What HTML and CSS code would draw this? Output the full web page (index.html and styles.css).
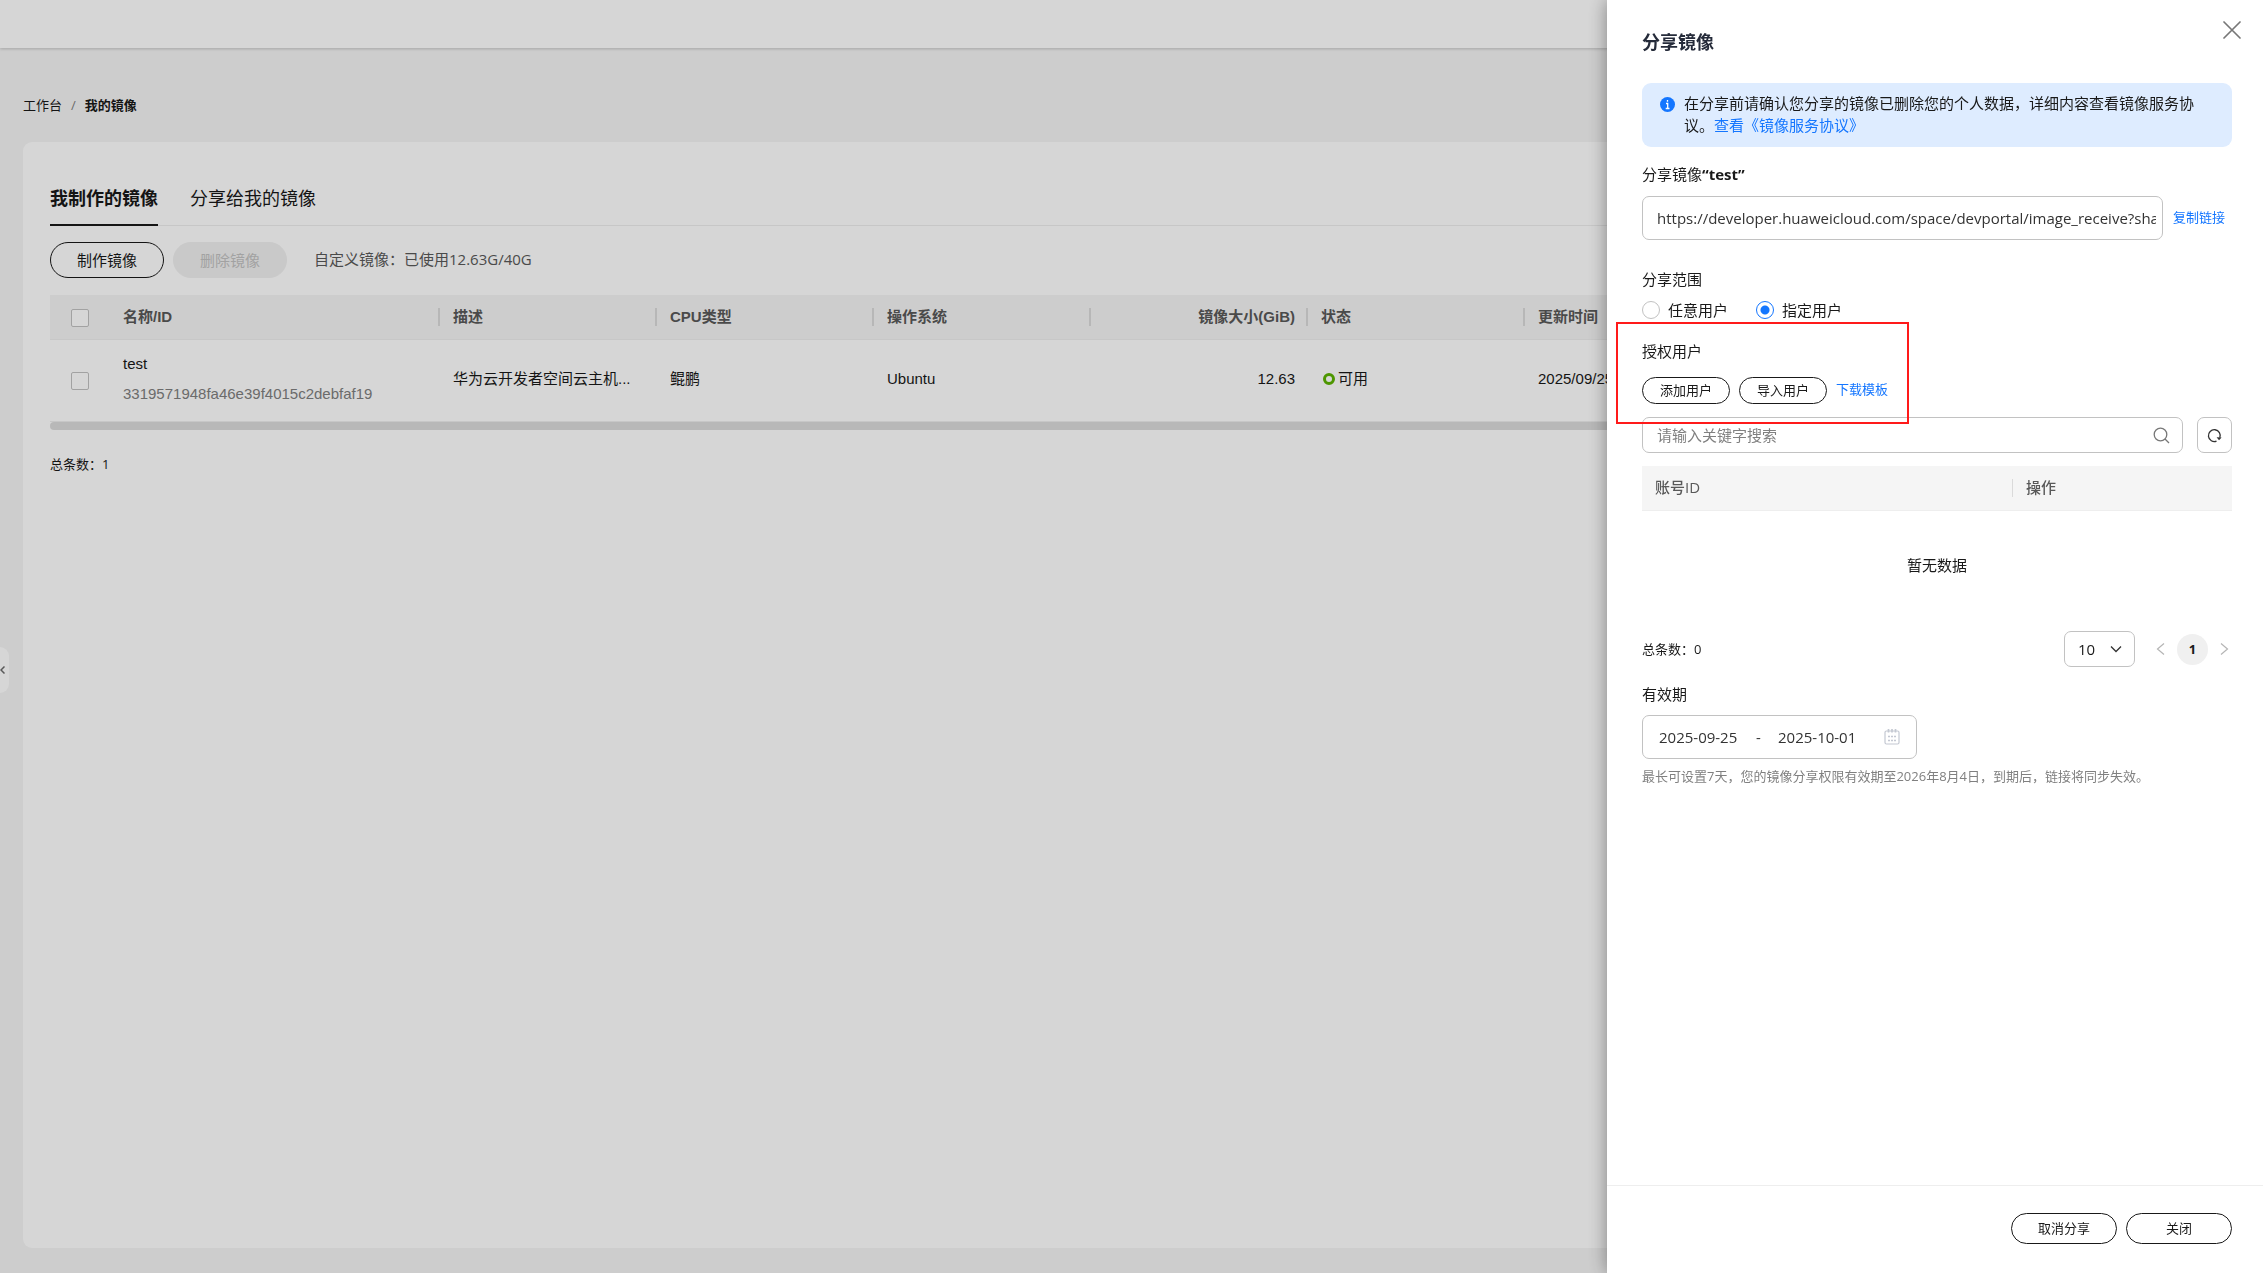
FILE: index.html
```html
<!DOCTYPE html>
<html lang="zh-CN">
<head>
    <meta charset="UTF-8">
    <meta name="viewport" content="width=device-width, initial-scale=1.0">
    <title>我的镜像</title>
    <link rel="stylesheet" href="styles.css">
</head>
<body>
    <header class="topbar"></header>

    <main class="page">
        <nav class="breadcrumb">
            <a href="#">工作台</a>
            <span class="breadcrumb-sep">/</span>
            <strong>我的镜像</strong>
        </nav>

        <section class="card">
            <div class="tabs">
                <a class="tab active" href="#">我制作的镜像</a>
                <a class="tab" href="#">分享给我的镜像</a>
            </div>

            <div class="toolbar">
                <button class="btn btn-lg" type="button">制作镜像</button>
                <button class="btn btn-lg" type="button" disabled>删除镜像</button>
                <span class="quota">自定义镜像：已使用12.63G/40G</span>
            </div>

            <div class="table-wrap">
                <table class="image-table">
                    <colgroup>
                        <col class="col-check">
                        <col class="col-name">
                        <col class="col-base" span="6">
                        <col>
                    </colgroup>
                    <thead>
                        <tr>
                            <th class="check"><input type="checkbox" aria-label="全选"></th>
                            <th>名称/ID</th>
                            <th>描述</th>
                            <th>CPU类型</th>
                            <th>操作系统</th>
                            <th class="num">镜像大小(GiB)</th>
                            <th>状态</th>
                            <th>更新时间</th>
                            <th></th>
                        </tr>
                    </thead>
                    <tbody>
                        <tr>
                            <td class="check"><input type="checkbox" aria-label="test"></td>
                            <td>
                                <div class="image-name">test</div>
                                <div class="image-id">3319571948fa46e39f4015c2debfaf19</div>
                            </td>
                            <td>华为云开发者空间云主机...</td>
                            <td>鲲鹏</td>
                            <td>Ubuntu</td>
                            <td class="num">12.63</td>
                            <td><span class="state">可用</span></td>
                            <td>2025/09/25</td>
                            <td></td>
                        </tr>
                    </tbody>
                </table>
                <div class="scrollbar"></div>
            </div>

            <div class="total">总条数：1</div>
        </section>
    </main>

    <button class="collapse" type="button" aria-label="展开">
        <svg width="5" height="8" viewBox="0 0 5 8"><path d="M4.500.5L1 4l3.500 3.500" fill="none" stroke="#6b6b6b" stroke-width="1.500"/></svg>
    </button>

    <div class="mask"></div>

    <aside class="drawer">
        <button class="close" type="button" aria-label="关闭">
            <svg width="18" height="18" viewBox="0 0 18 18"><path d="M1 1l16 16M17 1L1 17" fill="none" stroke="#777" stroke-width="1.700" stroke-linecap="round"/></svg>
        </button>

        <div class="drawer-body">
            <h2 class="drawer-title">分享镜像</h2>

            <div class="notice">
                <svg class="notice-icon" width="15" height="15" viewBox="0 0 15 15">
                    <circle cx="7.500" cy="7.500" r="7.500" fill="#1476ff"/>
                    <path d="M7.500 3v1.700M6 6.500h1.700v4.700M5.700 11.500h3.800" fill="none" stroke="#fff" stroke-width="1.300"/>
                </svg>
                <p>在分享前请确认您分享的镜像已删除您的个人数据，详细内容查看镜像服务协议。<a href="#">查看《镜像服务协议》</a></p>
            </div>

            <div class="field">
                <label for="share-url">分享镜像<b>“test”</b></label>
                <div class="url-row">
                    <input class="input" id="share-url" type="text" readonly value="https://developer.huaweicloud.com/space/devportal/image_receive?share">
                    <a class="small-link" href="#">复制链接</a>
                </div>
            </div>

            <fieldset class="scope">
                <legend>分享范围</legend>
                <div class="radios">
                    <label><input type="radio" name="scope">任意用户</label>
                    <label><input type="radio" name="scope" checked>指定用户</label>
                </div>
            </fieldset>

            <div class="auth">
                <div class="highlight"></div>
                <div>授权用户</div>
                <div class="auth-actions">
                    <button class="btn btn-sm" type="button">添加用户</button>
                    <button class="btn btn-sm" type="button">导入用户</button>
                    <a class="small-link" href="#">下载模板</a>
                </div>
            </div>

            <div class="search-row">
                <div class="search">
                    <input type="text" placeholder="请输入关键字搜索" aria-label="搜索">
                    <svg width="17" height="17" viewBox="0 0 17 17"><circle cx="7.500" cy="7.500" r="6.300" fill="none" stroke="#777" stroke-width="1.300"/><path d="M12 12l4 4" stroke="#777" stroke-width="1.300"/></svg>
                </div>
                <button class="refresh" type="button" aria-label="刷新">
                    <svg width="15" height="15" viewBox="0 0 15 15"><path d="M9.500 13.100A5.900 5.900 0 1 1 12.800 9.800" fill="none" stroke="#333" stroke-width="1.300"/><path d="M9.600 9.300l5 .3-2.600 2.600z" fill="#333"/></svg>
                </button>
            </div>

            <table class="user-table">
                <thead>
                    <tr>
                        <th class="account">账号ID</th>
                        <th>操作</th>
                    </tr>
                </thead>
                <tbody>
                    <tr>
                        <td colspan="2">暂无数据</td>
                    </tr>
                </tbody>
            </table>

            <div class="pager">
                <span class="pager-total">总条数：0</span>
                <div class="page-size">
                    <select aria-label="每页条数">
                        <option>10</option>
                    </select>
                    <svg width="12" height="8" viewBox="0 0 12 8"><path d="M1 1.500l5 5 5-5" fill="none" stroke="#333" stroke-width="1.300"/></svg>
                </div>
                <button class="page-arrow" type="button" aria-label="上一页">
                    <svg width="9" height="12" viewBox="0 0 9 12"><path d="M8 .5L1.500 6 8 11.500" fill="none" stroke="#b5b5b5" stroke-width="1.200"/></svg>
                </button>
                <button class="page-no" type="button">1</button>
                <button class="page-arrow" type="button" aria-label="下一页">
                    <svg width="9" height="12" viewBox="0 0 9 12"><path d="M1 .5L7.500 6 1 11.500" fill="none" stroke="#b5b5b5" stroke-width="1.200"/></svg>
                </button>
            </div>

            <div class="field">
                <label for="date-start">有效期</label>
                <div class="date-range">
                    <input id="date-start" type="text" value="2025-09-25">
                    <span>-</span>
                    <input type="text" value="2025-10-01" aria-label="结束日期">
                    <svg width="16" height="16" viewBox="0 0 16 16">
                        <rect x="1" y="2" width="14" height="13" rx="1.500" fill="none" stroke="#c4c8d2" stroke-width="1.200"/>
                        <path d="M4.500 0v3.500M8 0v3.500M11.500 0v3.500M4 7.500h2M7 7.500h2M10 7.500h2M4 11.500h2M7 11.500h2M10 11.500h2" stroke="#c4c8d2" stroke-width="1.700"/>
                    </svg>
                </div>
                <p class="hint">最长可设置7天，您的镜像分享权限有效期至2026年8月4日，到期后，链接将同步失效。</p>
            </div>
        </div>

        <footer class="drawer-footer">
            <button class="btn btn-md" type="button">取消分享</button>
            <button class="btn btn-md" type="button">关闭</button>
        </footer>
    </aside>
</body>
</html>
```

FILE: styles.css
```css
*,
*::before {
    box-sizing: border-box;
}

body {
    margin: 0;
    min-height: 100vh;
    display: flex;
    flex-direction: column;
    overflow: hidden;
    background: #f5f5f5;
    color: #191919;
    font-family: "Open Sans", "Noto Sans CJK SC", sans-serif;
    font-size: 15px;
    line-height: 22px;
}

a {
    color: #1476ff;
    text-decoration: none;
}

button,
input,
select {
    font: inherit;
    color: inherit;
}

button {
    padding: 0;
    border: none;
    background: none;
}

svg {
    display: block;
    flex: none;
}

.topbar {
    height: 48px;
    background: #fff;
    box-shadow: 0 1px 3px rgba(0, 0, 0, 0.2);
}

.page {
    flex: 1;
    display: flex;
    flex-direction: column;
    padding: 46px 23px 25px;
}

.breadcrumb {
    display: flex;
    gap: 9px;
    font-size: 13px;
}

.breadcrumb a {
    color: #191919;
}

.breadcrumb-sep {
    color: #808080;
}

.card {
    flex: 1;
    margin-top: 26px;
    padding: 33px 27px;
    border-radius: 9px;
    background: #fff;
}

/* tabs */
.tabs {
    display: flex;
    gap: 32px;
    border-bottom: 1px solid #eee;
    font-size: 18px;
}

.tab {
    height: 51px;
    padding-top: 12px;
    margin-bottom: -1px;
    color: #191919;
}

.tab.active {
    border-bottom: 2px solid #191919;
    font-weight: 700;
}

/* buttons */
.btn {
    border: 1px solid #191919;
    border-radius: 18px;
}

.btn:disabled {
    border-color: #f0f0f0;
    background: #f0f0f0;
    color: #c2c2c2;
}

.btn-lg {
    width: 114px;
    height: 36px;
}

.btn-md {
    width: 106px;
    height: 31px;
    padding-bottom: 2px;
    font-size: 13px;
}

.btn-sm {
    width: 88px;
    height: 27px;
    padding-bottom: 2px;
    font-size: 13px;
}

.toolbar {
    display: flex;
    align-items: center;
    gap: 9px;
    padding: 16px 0 17px;
}

.quota {
    margin-left: 18px;
    padding-bottom: 2px;
    color: #595959;
}

/* image table */
.table-wrap {
    overflow: hidden;
    font-family: "Liberation Sans", "Noto Sans CJK SC", sans-serif;
}

table {
    width: 100%;
    table-layout: fixed;
    border-collapse: collapse;
}

th,
td {
    padding: 0 13px;
    text-align: left;
}

.col-check {
    width: 60px;
}

.col-name {
    width: 330px;
}

.col-base {
    width: 217px;
}

.image-table th {
    height: 44px;
    border-bottom: 1px solid #eee;
    background: linear-gradient(#dadada, #dadada) right center / 2px 18px no-repeat #f5f5f5;
    color: #595959;
}

.image-table td {
    height: 82px;
    padding-bottom: 2px;
    border-bottom: 1px solid #eee;
    white-space: nowrap;
}

.image-table .check {
    padding: 2px 0 0 21px;
    background-image: none;
}

.image-table .num {
    text-align: right;
}

.check input {
    appearance: none;
    display: block;
    width: 18px;
    height: 18px;
    margin: 0;
    border: 1px solid #c2c2c2;
    border-radius: 2px;
    background: #fff;
}

.image-id {
    margin-top: 8px;
    color: #808080;
}

.state {
    display: flex;
    align-items: center;
    gap: 3px;
}

.state::before {
    content: "";
    width: 12px;
    height: 12px;
    margin-left: 2px;
    border: 3px solid #5cb300;
    border-radius: 50%;
}

.scrollbar {
    height: 8px;
    border-radius: 4px;
    background: #dcdcdc;
}

.total {
    margin-top: 23px;
    font-size: 13px;
}

.collapse {
    position: absolute;
    left: 0;
    top: 647px;
    display: flex;
    align-items: center;
    width: 9px;
    height: 46px;
    border-radius: 0 9px 9px 0;
    background: #fff;
}

.mask {
    position: fixed;
    inset: 0;
    background: rgba(0, 0, 0, 0.16);
}

/* drawer */
.drawer {
    position: fixed;
    top: 0;
    right: 0;
    bottom: 0;
    display: flex;
    flex-direction: column;
    width: 656px;
    max-width: 100%;
    background: #fff;
    box-shadow: 0 0 18px rgba(0, 0, 0, 0.4);
}

.close {
    position: absolute;
    top: 21px;
    right: 22px;
}

.drawer-body {
    flex: 1;
    padding: 31px 31px 0 35px;
}

.drawer-title {
    margin: 0;
    color: #252b3a;
    font-size: 18px;
    line-height: 22px;
}

.notice {
    display: flex;
    gap: 9px;
    margin-top: 30px;
    padding: 9px 28px 11px 18px;
    border-radius: 9px;
    background: #deecff;
}

.notice p {
    margin: 0;
}

.notice-icon {
    margin-top: 5px;
}

.field {
    display: flex;
    flex-direction: column;
    margin-top: 16px;
}

.url-row {
    display: flex;
    align-items: center;
    gap: 10px;
    margin-top: 11px;
    padding-right: 7px;
}

.input {
    flex: 1;
    min-width: 0;
    height: 44px;
    padding: 0 6px 0 14px;
    border: 1px solid #c2c2c2;
    border-radius: 7px;
    color: #333;
}

.small-link {
    padding-bottom: 3px;
    font-size: 13px;
}

.scope {
    margin: 28px 0 0;
    padding: 0;
    border: none;
}

.scope legend {
    padding: 0;
}

.radios {
    display: flex;
    gap: 28px;
    margin-top: 9px;
}

.radios label {
    display: flex;
    align-items: center;
    gap: 8px;
}

.radios input {
    appearance: none;
    width: 18px;
    height: 18px;
    margin: 0;
    border: 1px solid #c2c2c2;
    border-radius: 50%;
}

.radios input:checked {
    border-color: #1476ff;
    background: radial-gradient(circle, #1476ff 4px, #fff 5px);
}

.auth {
    position: relative;
    margin-top: 19px;
}

.auth-actions {
    display: flex;
    align-items: center;
    gap: 9px;
    margin-top: 15px;
}

.highlight {
    position: absolute;
    z-index: 1;
    top: -18px;
    left: -26px;
    width: 293px;
    height: 102px;
    border: 2px solid #ff1a1a;
    pointer-events: none;
}

.search-row {
    display: flex;
    gap: 14px;
    margin: 13px 0;
}

.search {
    flex: 1;
    display: flex;
    align-items: center;
    height: 36px;
    padding: 0 12px 0 14px;
    border: 1px solid #c2c2c2;
    border-radius: 7px;
}

.search input {
    flex: 1;
    padding: 0;
    border: none;
    outline: none;
}

.search input::placeholder {
    color: #808080;
}

.refresh {
    display: flex;
    align-items: center;
    justify-content: center;
    width: 35px;
    height: 36px;
    border: 1px solid #c2c2c2;
    border-radius: 7px;
}

.user-table th {
    height: 44px;
    padding-bottom: 2px;
    border-bottom: 1px solid #eee;
    background: #f5f5f5;
    color: #595959;
    font-weight: 500;
}

.user-table .account {
    width: 371px;
    background: linear-gradient(#dadada, #dadada) right center / 1px 18px no-repeat #f5f5f5;
}

.user-table td {
    height: 110px;
    text-align: center;
}

.pager {
    display: flex;
    align-items: center;
    margin-top: 11px;
    padding-right: 3px;
    font-size: 13px;
}

.pager-total {
    flex: 1;
}

.page-size {
    display: grid;
    align-items: center;
    width: 71px;
    height: 36px;
    margin-right: 21px;
    border: 1px solid #c2c2c2;
    border-radius: 7px;
    font-size: 15px;
}

.page-size > * {
    grid-area: 1 / 1;
}

.page-size select {
    appearance: none;
    padding: 0 13px;
    border: none;
    background: none;
}

.page-size svg {
    justify-self: end;
    margin-right: 12px;
}

.page-no {
    width: 31px;
    height: 31px;
    margin: 0 12px;
    border-radius: 50%;
    background: #f0f0f0;
    font-weight: 700;
}

.date-range {
    display: flex;
    align-items: center;
    width: 275px;
    height: 44px;
    margin-top: 10px;
    padding: 0 16px;
    border: 1px solid #c2c2c2;
    border-radius: 7px;
    color: #333;
}

.date-range input {
    width: 80px;
    padding: 0;
    border: none;
}

.date-range span {
    width: 39px;
    text-align: center;
}

.date-range svg {
    margin-left: auto;
}

.hint {
    margin: 7px 0 0;
    color: #808080;
    font-size: 13px;
    line-height: 20px;
}

.drawer-footer {
    display: flex;
    justify-content: flex-end;
    gap: 9px;
    height: 88px;
    padding: 27px 31px 0;
    border-top: 1px solid #eee;
}
```
